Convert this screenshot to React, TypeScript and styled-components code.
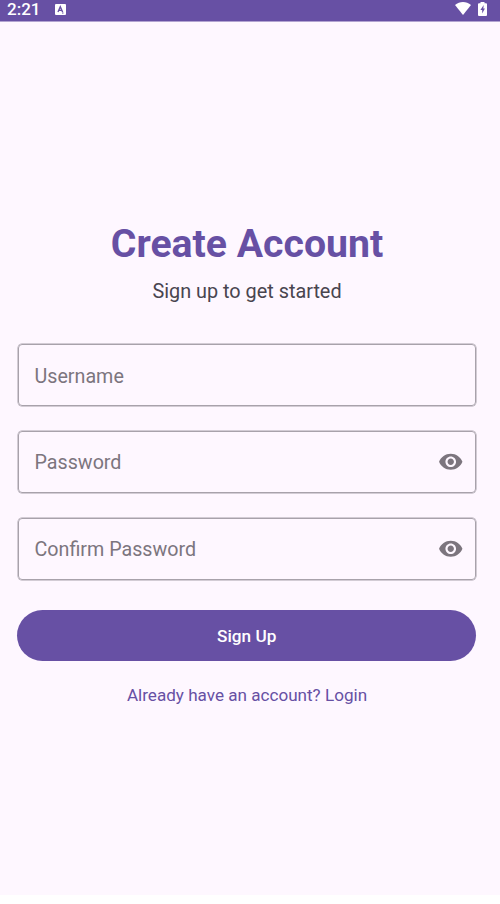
import { useState } from "react";
import styled, { createGlobalStyle } from "styled-components";

const GlobalStyle = createGlobalStyle`
  * {
    box-sizing: border-box;
  }
  body {
    margin: 0;
    background-color: #ffffff;
    font-family: Roboto, "Liberation Sans", sans-serif;
  }
`;

const Screen = styled.div`
  width: 500px;
  height: 895px;
  background-color: #fef7ff;
`;

const StatusBar = styled.header`
  height: 21px;
  padding: 0 13px 4px 7px;
  display: flex;
  align-items: center;
  justify-content: space-between;
  background-color: #6750a4;
  box-shadow: 0 0.5px 0 #6750a4;
  color: white;
`;

const StatusGroup = styled.div<{ gap: number }>`
  display: flex;
  align-items: center;
  gap: ${(props) => props.gap}px;

  svg {
    display: block;
  }
`;

const Clock = styled.span`
  font-size: 17px;
  line-height: 18px;
  font-weight: 500;
`;

const Form = styled.form`
  width: 458px;
  margin-left: 18px;
  padding-top: 199px;
  display: flex;
  flex-direction: column;
`;

const Title = styled.h1`
  margin: 0;
  text-align: center;
  font-size: 39.2px;
  line-height: 48px;
  font-weight: 700;
  color: #6750a4;
`;

const Subtitle = styled.p`
  margin: 10px 0 38px;
  text-align: center;
  font-size: 19.85px;
  line-height: 28px;
  color: #49454f;
`;

const Fields = styled.div`
  display: flex;
  flex-direction: column;
  gap: 24.4px;
`;

const Field = styled.label`
  height: 62.4px;
  padding: 0 12px 0 15.5px;
  display: flex;
  align-items: center;
  border: 1px solid #a8a2ab;
  border-radius: 4px;
  box-shadow: 0 0 0 0.5px #a8a2ab;
`;

const Input = styled.input`
  flex: 1;
  min-width: 0;
  padding: 2px 0 0;
  border: none;
  outline: none;
  background: none;
  font-family: inherit;
  font-size: 19.7px;
  color: #1d1b20;

  &::placeholder {
    color: #7c757e;
    opacity: 1;
  }
`;

const Toggle = styled.button`
  padding: 0;
  border: none;
  background: none;
  color: #7c757e;

  svg {
    display: block;
  }
`;

const Submit = styled.button`
  height: 51px;
  margin: 30px 0 0 -0.6px;
  padding: 1px 0 0;
  border: none;
  border-radius: 26px;
  background-color: #6750a4;
  color: white;
  font-family: inherit;
  font-size: 17.2px;
  font-weight: 500;
`;

const LoginLink = styled.a`
  margin-top: 22px;
  text-align: center;
  font-size: 17.1px;
  line-height: 24px;
  color: #6750a4;
`;

function PasswordField({ label }: { label: string }) {
  const [visible, setVisible] = useState(false);
  return (
    <Field>
      <Input type={visible ? "text" : "password"} placeholder={label} />
      <Toggle
        type="button"
        aria-label="Toggle visibility"
        onClick={() => setVisible((prev) => !prev)}
      >
        <svg width="25.5" height="25.5" viewBox="0 0 24 24" fill="currentColor">
          <path d="M12 4.5C7 4.5 2.73 7.61 1 12c1.73 4.39 6 7.5 11 7.5s9.27-3.11 11-7.5c-1.73-4.39-6-7.5-11-7.5zM12 17c-2.76 0-5-2.24-5-5s2.24-5 5-5 5 2.24 5 5-2.24 5-5 5zm0-8c-1.66 0-3 1.34-3 3s1.34 3 3 3 3-1.34 3-3-1.34-3-3-3z" />
        </svg>
      </Toggle>
    </Field>
  );
}

function App() {
  return (
    <Screen>
      <GlobalStyle />
      <StatusBar>
        <StatusGroup gap={15}>
          <Clock>2:21</Clock>
          <svg width="11" height="12" viewBox="0 -1 11 12">
            <rect width="11" height="11" rx="1" fill="white" />
            <path
              d="M3 8 5.3 2.7 7.6 8M3.8 6.4h3"
              fill="none"
              stroke="#6750a4"
              strokeWidth="1.4"
            />
            <path d="M7 9h1.5" stroke="#6750a4" />
          </svg>
        </StatusGroup>
        <StatusGroup gap={7}>
          <svg width="16" height="13" viewBox="0 0 16 13" fill="white">
            <path d="M0 3C4.6-1 11.4-1 16 3L8 13z" />
          </svg>
          <svg width="9" height="14" viewBox="0 0 9 14">
            <path
              d="M2.5 0h4v1.3H8q1 0 1 1V13q0 1-1 1H1q-1 0-1-1V2.3q0-1 1-1h1.5z"
              fill="white"
            />
            <path d="M5.7 3 2.4 8h1.8v3.6L6.9 6.4H5.3z" fill="#6750a4" />
          </svg>
        </StatusGroup>
      </StatusBar>
      <Form>
        <Title>Create Account</Title>
        <Subtitle>Sign up to get started</Subtitle>
        <Fields>
          <Field>
            <Input type="text" placeholder="Username" />
          </Field>
          <PasswordField label="Password" />
          <PasswordField label="Confirm Password" />
        </Fields>
        <Submit type="button">Sign Up</Submit>
        <LoginLink>Already have an account? Login</LoginLink>
      </Form>
    </Screen>
  );
}

export default App;
